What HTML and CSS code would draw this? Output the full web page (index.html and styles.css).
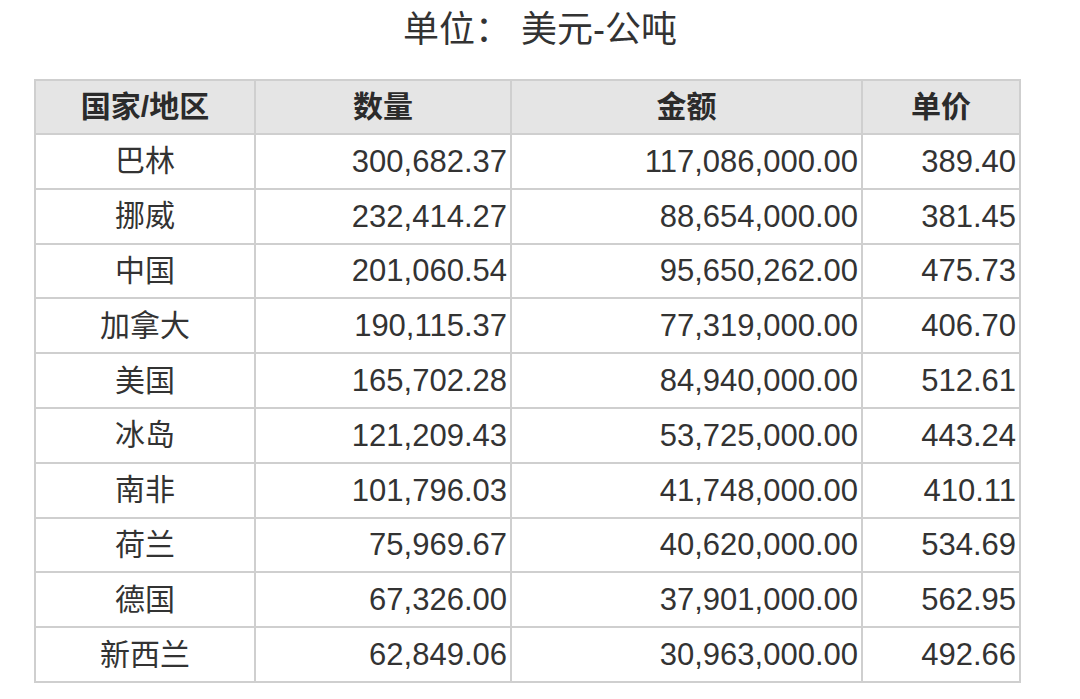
FILE: index.html
```html
<!DOCTYPE html>
<html lang="zh-CN">
<head>
<meta charset="utf-8">
<title>单位： 美元-公吨</title>
<link rel="stylesheet" href="styles.css">
</head>
<body>
<div class="page">
  <h1 class="title"><span class="title-label">单位：</span>美元-公吨</h1>
  <table class="data">
    <colgroup>
      <col class="c1"><col class="c2"><col class="c3"><col class="c4">
    </colgroup>
    <thead>
      <tr><th>国家/地区</th><th>数量</th><th>金额</th><th>单价</th></tr>
    </thead>
    <tbody>
      <tr><td class="name">巴林</td><td>300,682.37</td><td>117,086,000.00</td><td>389.40</td></tr>
      <tr><td class="name">挪威</td><td>232,414.27</td><td>88,654,000.00</td><td>381.45</td></tr>
      <tr><td class="name">中国</td><td>201,060.54</td><td>95,650,262.00</td><td>475.73</td></tr>
      <tr><td class="name">加拿大</td><td>190,115.37</td><td>77,319,000.00</td><td>406.70</td></tr>
      <tr><td class="name">美国</td><td>165,702.28</td><td>84,940,000.00</td><td>512.61</td></tr>
      <tr><td class="name">冰岛</td><td>121,209.43</td><td>53,725,000.00</td><td>443.24</td></tr>
      <tr><td class="name">南非</td><td>101,796.03</td><td>41,748,000.00</td><td>410.11</td></tr>
      <tr><td class="name">荷兰</td><td>75,969.67</td><td>40,620,000.00</td><td>534.69</td></tr>
      <tr><td class="name">德国</td><td>67,326.00</td><td>37,901,000.00</td><td>562.95</td></tr>
      <tr><td class="name">新西兰</td><td>62,849.06</td><td>30,963,000.00</td><td>492.66</td></tr>
    </tbody>
  </table>
</div>
</body>
</html>
```
FILE: styles.css
```css
html, body {
  margin: 0;
  padding: 0;
  background: #ffffff;
}

body {
  font-family: "Liberation Sans", "Noto Sans CJK SC", sans-serif;
  color: #333333;
}

.page {
  width: 1080px;
  height: 699px;
  overflow: hidden;
}

.title {
  margin: 0;
  height: 60px;
  line-height: 60px;
  font-size: 36px;
  font-weight: normal;
  text-align: center;
  color: #333333;
}

.title-label {
  margin-right: 10px;
}

.data {
  margin: 19px 0 0 34px;
  border-collapse: collapse;
  table-layout: fixed;
  width: 985px;
  font-size: 30px;
}

.c1 { width: 220px; }
.c2 { width: 256px; }
.c3 { width: 351px; }
.c4 { width: 158px; }

.data th,
.data td {
  border: 2px solid #cfcfcf;
  padding: 0 3px;
  line-height: 1;
  white-space: nowrap;
}

.data thead tr {
  height: 54px;
}

.data th {
  background: #e5e5e5;
  font-weight: bold;
  text-align: center;
  color: #2b2b2b;
}

.data tbody tr {
  height: 54.8px;
}

.data td {
  text-align: right;
  font-size: 31px;
}

.data td.name {
  text-align: center;
  font-size: 30px;
}
```
